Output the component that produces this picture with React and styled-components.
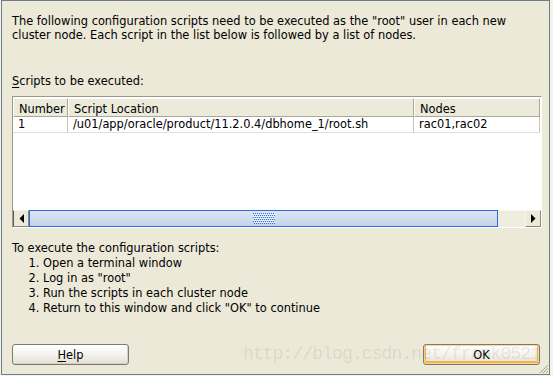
import styled, { createGlobalStyle } from "styled-components";

const GlobalStyle = createGlobalStyle`
  html, body {
    margin: 0;
    padding: 0;
    background: #f3f2ec;
  }
  body {
    font-family: "DejaVu Sans", sans-serif;
    font-size: 11.4px;
    color: #000;
  }
`;

const Window = styled.div`
  position: relative;
  box-sizing: border-box;
  margin-left: 1px;
  width: 549px;
  height: 375px;
  background: #ece9d8;
  border: 1px solid #6f7c8c;
  padding: 14px 9px 9px 10px;
  display: flex;
  flex-direction: column;
  overflow: hidden;
`;

const Para = styled.p`
  margin: 0;
  line-height: 13.5px;
  white-space: pre-line;
`;

const Label = styled.div`
  margin-top: 32px;
  line-height: 14px;
`;

const Mnemonic = styled.span`
  text-decoration: underline;
  text-underline-offset: 2px;
`;

const ScrollPane = styled.div`
  margin-top: 8px;
  box-sizing: border-box;
  width: 530px;
  height: 132px;
  border: 1px solid #9d9a8c;
  border-right-color: #ffffff;
  border-bottom-color: #ffffff;
  background: #fff;
  display: flex;
  flex-direction: column;
`;

const Viewport = styled.div`
  flex: 1;
  padding-top: 1px;
  overflow: hidden;
`;

const Grid = styled.div`
  display: grid;
  grid-template-columns: 55px 346px 126px;
`;

const HeadCell = styled.div`
  box-sizing: border-box;
  height: 19px;
  line-height: 17px;
  padding: 2px 0 0 5px;
  background: #ebeadb;
  border-top: 1px solid #fff;
  border-left: 1px solid #fff;
  border-right: 1px solid #aca899;
  border-bottom: 1px solid #aca899;
  white-space: nowrap;
`;

const Cell = styled.div`
  box-sizing: border-box;
  height: 16px;
  line-height: 15px;
  padding-left: 5px;
  border-right: 1px solid #c9c7bc;
  border-bottom: 1px solid #e2e0d6;
  white-space: nowrap;
  overflow: hidden;
`;

const HScroll = styled.div`
  display: flex;
  height: 17px;
  background: #efeee6;
`;

const ArrowButton = styled.div`
  box-sizing: border-box;
  width: 16px;
  height: 17px;
  background: #ece9d8;
  border: 1px solid #8a8878;
  border-top-color: #f6f5ef;
  border-left-color: ${(p) => (p.$side === "left" ? "#5d5c55" : "#f6f5ef")};
  display: flex;
  align-items: center;
  justify-content: center;
`;

const Thumb = styled.div`
  box-sizing: border-box;
  width: 469px;
  height: 17px;
  border: 1px solid #3168d5;
  background: linear-gradient(#dbe6f5, #c3d3ea);
  display: flex;
  align-items: center;
  justify-content: center;
`;

const Track = styled.div`
  flex: 1;
  background: #efece0;
  border-top: 1px solid #f7f6f0;
`;

const Instructions = styled.div`
  margin-top: 13px;
  line-height: 15px;
`;

const Steps = styled.ol`
  margin: 0;
  padding-left: 31px;
  line-height: 15px;
`;

const Footer = styled.div`
  margin-top: auto;
  display: flex;
  justify-content: space-between;
`;

const Button = styled.button`
  box-sizing: border-box;
  width: 117px;
  height: 21px;
  padding: 0;
  font-family: "DejaVu Sans", sans-serif;
  font-size: 11.4px;
  color: #000;
  border-radius: 3px;
  border: 1px solid #7b7a73;
  background: linear-gradient(#ffffff 0%, #f4f3ee 50%, #e3e0d2 100%);
  box-shadow: ${(p) =>
    p.$default
      ? "inset 0 0 0 1px #fbd88e, inset 0 -1px 0 2px #f3b548"
      : "inset -1px -1px 0 #d6d2c2"};
`;

const Watermark = styled.div`
  position: absolute;
  left: 241px;
  top: 343px;
  font-family: "Liberation Mono", monospace;
  font-size: 18px;
  letter-spacing: -0.9px;
  color: rgba(110, 108, 100, 0.15);
  pointer-events: none;
  white-space: nowrap;
`;

const Grip = styled.svg`
  position: absolute;
  right: 0;
  bottom: 0;
`;

function Triangle({ dir }) {
  return (
    <svg width="5" height="9" viewBox="0 0 5 9">
      {dir === "left" ? (
        <polygon points="5,0 5,9 0.5,4.5" fill="#000" />
      ) : (
        <polygon points="0,0 0,9 4.5,4.5" fill="#000" />
      )}
    </svg>
  );
}

function GripDots() {
  const dots = [];
  for (let y = 0; y < 11; y += 2) {
    for (let x = 0; x < 22; x += 2) {
      const off = (y / 2) % 2;
      dots.push(<rect key={`${x}-${y}`} x={x + off} y={y} width="1" height="1" fill="#3a6fd8" />);
      dots.push(<rect key={`w${x}-${y}`} x={x + 1 - off} y={y + 1} width="1" height="1" fill="#ffffff" />);
    }
  }
  return (
    <svg width="22" height="11" viewBox="0 0 22 11">
      {dots}
    </svg>
  );
}

const rows = [
  { number: "1", location: "/u01/app/oracle/product/11.2.0.4/dbhome_1/root.sh", nodes: "rac01,rac02" },
];

export default function App() {
  return (
    <>
      <GlobalStyle />
      <Window>
        <Para>
          {'The following configuration scripts need to be executed as the "root" user in each new\ncluster node. Each script in the list below is followed by a list of nodes.'}
        </Para>
        <Label>
          <Mnemonic>S</Mnemonic>cripts to be executed:
        </Label>
        <ScrollPane>
          <Viewport>
            <Grid>
              <HeadCell>Number</HeadCell>
              <HeadCell>Script Location</HeadCell>
              <HeadCell>Nodes</HeadCell>
              {rows.map((r) => [
                <Cell key={`n${r.number}`}>{r.number}</Cell>,
                <Cell key={`l${r.number}`}>{r.location}</Cell>,
                <Cell key={`d${r.number}`}>{r.nodes}</Cell>,
              ])}
            </Grid>
          </Viewport>
          <HScroll>
            <ArrowButton $side="left">
              <Triangle dir="left" />
            </ArrowButton>
            <Thumb>
              <GripDots />
            </Thumb>
            <Track />
            <ArrowButton $side="right">
              <Triangle dir="right" />
            </ArrowButton>
          </HScroll>
        </ScrollPane>
        <Instructions>To execute the configuration scripts:</Instructions>
        <Steps>
          <li>Open a terminal window</li>
          <li>Log in as "root"</li>
          <li>Run the scripts in each cluster node</li>
          <li>Return to this window and click "OK" to continue</li>
        </Steps>
        <Footer>
          <Button>
            <Mnemonic>H</Mnemonic>elp
          </Button>
          <Button $default>OK</Button>
        </Footer>
        <Watermark>http://blog.csdn.net/frank0521</Watermark>
        <Grip width="10" height="10" viewBox="0 0 10 10">
          <line x1="9" y1="1" x2="1" y2="9" stroke="#a7a493" />
          <line x1="9" y1="4" x2="4" y2="9" stroke="#a7a493" />
          <line x1="9" y1="7" x2="7" y2="9" stroke="#a7a493" />
        </Grip>
      </Window>
    </>
  );
}
